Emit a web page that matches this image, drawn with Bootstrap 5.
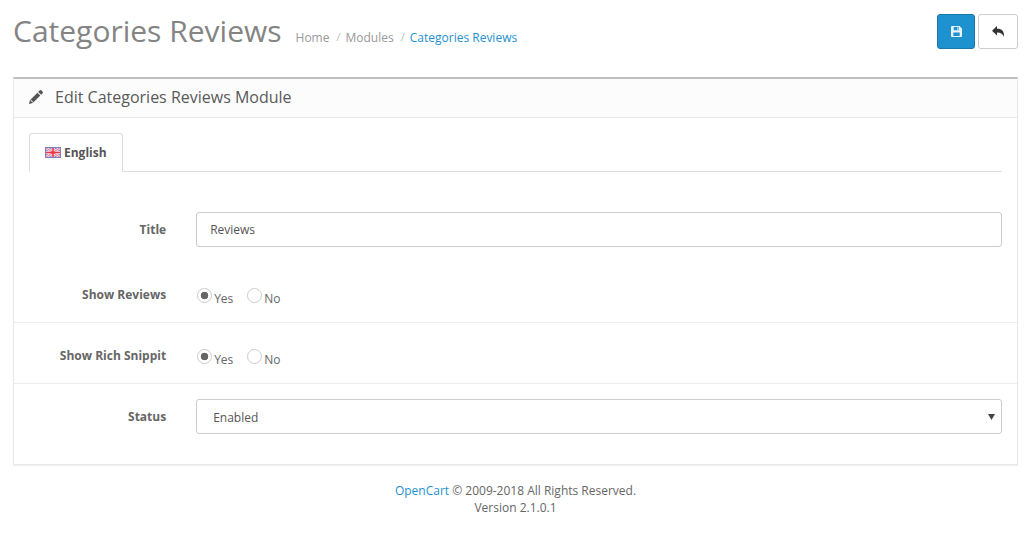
<!DOCTYPE html>
<html lang="en">
<head>
<meta charset="utf-8">
<title>Categories Reviews</title>
<link href="https://cdn.jsdelivr.net/npm/bootstrap@5.3.0/dist/css/bootstrap.min.css" rel="stylesheet">
<style>
body{font-family:"Open Sans",sans-serif;font-size:12px;color:#666;background:#fff;}
.page-wrap{padding:0 14px 0 13px;}
.page-top{height:77px;}
.page-title{font-size:30px;font-weight:400;color:#848484;margin:0;line-height:33px;padding-top:14px;}
.crumbs{margin:0 0 0 14px;font-size:12px;padding-top:29px;--bs-breadcrumb-item-padding-x:7px;}
.crumbs a{color:#999;text-decoration:none;}
.crumbs .breadcrumb-item+.breadcrumb-item::before{color:#bbb;font-size:11px;padding-right:5px;}
.crumbs .breadcrumb-item:last-child a{color:#1e91cf;}
.top-actions{padding-top:14px;gap:3px;}
.act-btn{width:38px;height:35px;padding:0;display:flex;align-items:center;justify-content:center;border-radius:3px;}
.act-save{background:#1e91cf;border:1px solid #1978ab;}
.act-back{width:40px;background:#fff;border:1px solid #ccc;}
.mod-panel{border:1px solid #e8e8e8;border-top:2px solid #bfbfbf;border-radius:0;box-shadow:0 1px 1px rgba(0,0,0,.05);}
.mod-head{background:#fcfcfc;border-bottom:1px solid #e8e8e8;height:39px;padding:0 15px 2px;color:#595959;font-size:16px;gap:12px;border-radius:0;}
.mod-body{padding:15px;}
.lang-tabs{border-bottom:1px solid #ddd;margin-bottom:25px;height:39px;}
.lang-tabs .nav-link.active{height:39px;padding:0 15px;border:1px solid #ddd;border-bottom-color:#fff;border-radius:3px 3px 0 0;color:#555;font-weight:700;font-size:12px;display:flex;align-items:center;gap:3px;background:#fff;margin-bottom:-1px;}
.field-row{--bs-gutter-x:30px;padding:15px 0;}
.field-row+.field-row.lined{border-top:1px solid #ededed;}
.field-label{text-align:right;font-weight:700;color:#666;font-size:12px;}
.label-top{padding-top:9px;line-height:18px;}
.field-input{height:35px;font-size:12px;color:#555;border:1px solid #ccc;border-radius:3px;padding:8px 13px;font-family:inherit;}
.field-select{background-image:url("data:image/svg+xml,%3Csvg xmlns='http://www.w3.org/2000/svg' width='7' height='6'%3E%3Cpath fill='%23444' d='M0 0h7L3.500 6z'/%3E%3C/svg%3E");background-size:7px 6px;background-position:right 6px center;padding:9px 20px 7px 16px;}
.radio-row{height:30px;gap:13px;padding-top:1px;}
.radio-opt{display:flex;align-items:flex-start;color:#666;font-size:12px;margin:0;padding-top:3px;}
.radio-opt span{margin-top:10px;margin-left:2px;line-height:16px;}
.radio-dot{width:15px;height:15px;margin:7px 0 0 1px;border:1px solid #ccc;background:#fff;flex:none;appearance:none;border-radius:50%;display:block;}
.radio-dot:checked{background-color:#fff;background-image:radial-gradient(circle,#666 0,#666 3.500px,transparent 4.100px);border-color:#ccc;}
.foot-note{text-align:center;padding-top:17px;line-height:17px;color:#666;}
.foot-note a{color:#1e91cf;text-decoration:none;}
</style>
</head>
<body>
<div class="page-wrap">
  <div class="page-top d-flex justify-content-between align-items-start">
    <div class="d-flex align-items-start">
      <h1 class="page-title">Categories Reviews</h1>
      <ol class="breadcrumb crumbs">
        <li class="breadcrumb-item"><a href="#">Home</a></li>
        <li class="breadcrumb-item"><a href="#">Modules</a></li>
        <li class="breadcrumb-item"><a href="#">Categories Reviews</a></li>
      </ol>
    </div>
    <div class="d-flex top-actions">
      <button type="button" class="btn act-btn act-save" aria-label="Save">
        <svg width="11" height="11" viewBox="0 0 12 12"><path fill="#e6f3fb" fill-rule="evenodd" d="M1 0h8.300L12 2.700V11a1 1 0 0 1-1 1H1a1 1 0 0 1-1-1V1a1 1 0 0 1 1-1zm2 1v3.500h5.500V1H3zM2.500 7v4h7V7h-7z"/><path fill="#e6f3fb" d="M6.800 1.500h1.200v2.500H6.800z"/></svg>
      </button>
      <button type="button" class="btn act-btn act-back" aria-label="Back">
        <svg width="12" height="11" viewBox="0 0 12 11"><path fill="#333" d="M5 0v2.800c4.300 0 6.800 1.900 7 6.200v2C10.900 8 9 6.500 5 6.500V9.500L0 4.800z"/></svg>
      </button>
    </div>
  </div>

  <div class="card mod-panel">
    <div class="card-header mod-head d-flex align-items-center">
      <svg width="14" height="14" viewBox="0 0 14 14"><path fill="#555" d="M10.500.6a1.500 1.500 0 0 1 2.100 0l.8.8a1.500 1.500 0 0 1 0 2.100l-1.300 1.300-2.900-2.900zM8.400 2.700l2.900 2.900-7.500 7.500L0 14l.9-3.800zM1.600 10.600l1.800 1.800 1-.2-2.600-2.600z"/></svg>
      <span>Edit Categories Reviews Module</span>
    </div>
    <div class="card-body mod-body">
      <ul class="nav nav-tabs lang-tabs">
        <li class="nav-item">
          <a class="nav-link active" href="#">
            <svg width="16" height="11" viewBox="0 0 16 11"><rect width="16" height="11" fill="#8e8ed2"/><path stroke="#f8e6ea" stroke-width="3" d="M8 0v11M0 5.500h16"/><path stroke="#f8e6ea" stroke-width="2.500" d="M0 0l16 11M16 0L0 11"/><path stroke="#f26a7a" stroke-width="1" d="M0 0l16 11M16 0L0 11"/><path stroke="#ee3344" stroke-width="1.600" d="M8 0v11M0 5.500h16"/><rect x=".5" y=".5" width="15" height="10" fill="none" stroke="#8080b8"/></svg>
            English
          </a>
        </li>
      </ul>

      <div class="row field-row align-items-center">
        <label class="col-2 field-label" for="ttl">Title</label>
        <div class="col-10"><input id="ttl" type="text" class="form-control field-input" value="Reviews"></div>
      </div>
      <div class="row field-row">
        <div class="col-2 field-label label-top">Show Reviews</div>
        <div class="col-10 d-flex radio-row">
          <label class="radio-opt"><input class="form-check-input radio-dot" type="radio" name="sr" checked><span>Yes</span></label>
          <label class="radio-opt"><input class="form-check-input radio-dot" type="radio" name="sr"><span>No</span></label>
        </div>
      </div>
      <div class="row field-row lined">
        <div class="col-2 field-label label-top">Show Rich Snippit</div>
        <div class="col-10 d-flex radio-row">
          <label class="radio-opt"><input class="form-check-input radio-dot" type="radio" name="rs" checked><span>Yes</span></label>
          <label class="radio-opt"><input class="form-check-input radio-dot" type="radio" name="rs"><span>No</span></label>
        </div>
      </div>
      <div class="row field-row lined align-items-center">
        <label class="col-2 field-label" for="st">Status</label>
        <div class="col-10"><select id="st" class="form-select field-input field-select"><option>Enabled</option></select></div>
      </div>
    </div>
  </div>

  <div class="foot-note"><a href="#">OpenCart</a> © 2009-2018 All Rights Reserved.<br>Version 2.1.0.1</div>
</div>
<script src="https://cdn.jsdelivr.net/npm/bootstrap@5.3.0/dist/js/bootstrap.bundle.min.js"></script>
</body>
</html>
